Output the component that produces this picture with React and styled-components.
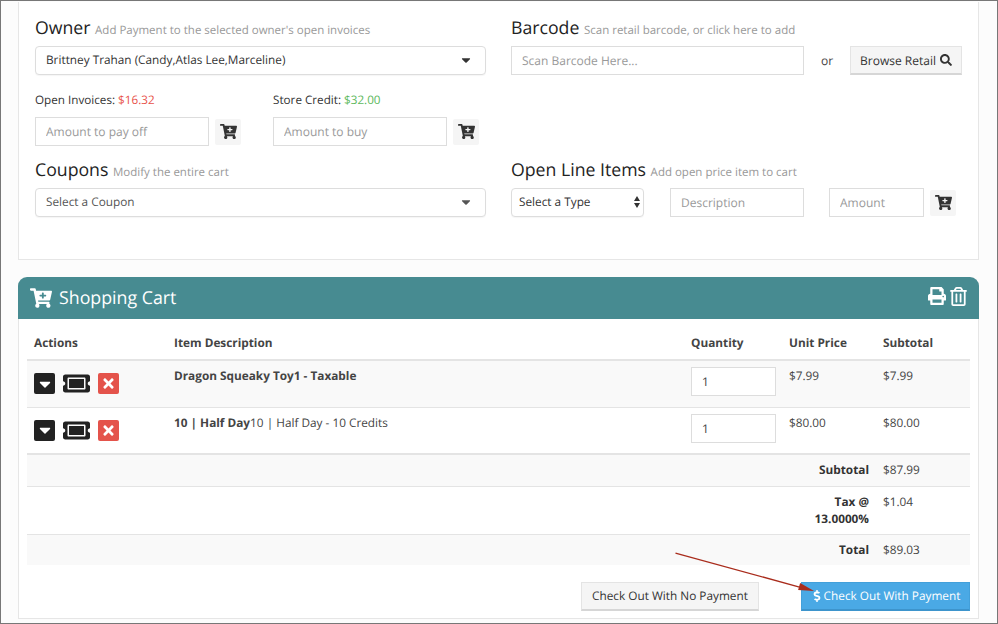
import React from 'react';
import styled, { createGlobalStyle } from 'styled-components';
import { FaCartPlus, FaSearch, FaPrint, FaRegTrashAlt, FaTicketAlt, FaCaretDown, FaTimes, FaDollarSign } from 'react-icons/fa';

const Global = createGlobalStyle`
html,body{margin:0;padding:0;background:#fcfcfc;}
body{font-family:"Open Sans","Liberation Sans",sans-serif;font-size:13px;color:#333;text-rendering:geometricPrecision;}
*{box-sizing:border-box;}
input{text-rendering:geometricPrecision;}
input::placeholder{color:#999;opacity:1;}
`
const Frame = styled.div`
width:998px;
height:624px;
border:1px solid #777;
padding:0 18px 0 17px;
overflow:hidden;
`
const TopCard = styled.div`
height:258px;
margin-top:1px;
background:#fff;
border:1px solid #e6e6e6;
border-top:none;
padding:14px 16px 0 16px;
display:grid;
grid-template-columns:451px 451px;
column-gap:25px;
align-content:start;
`
const Section = styled.div`
display:flex;
flex-direction:column;
height:${props=>props.h}px;
`
const Heading = styled.div`
font-size:17.7px;
line-height:24px;
height:${props=>props.h||30}px;
color:#222;
white-space:nowrap;
small{font-size:11.5px;color:#999;}
`
const SelectBox = styled.div`
height:29px;
width:${props=>props.w||'100%'};
border:1px solid #ddd;
border-radius:4px;
background:#fff;
padding:0 ${props=>props.pr||13}px 1px ${props=>props.pl||10}px;
display:flex;
align-items:center;
justify-content:space-between;
font-size:11.8px;
color:${props=>props.dim?'#555':'#333'};
box-shadow:0 1px 1px rgba(0,0,0,.04);
flex-shrink:0;
svg{font-size:14px;}
`
const Input = styled.input`
height:29px;
width:${props=>props.w}px;
flex-shrink:0;
border:1px solid #ddd;
background:#fff;
padding:0 10px;
font-family:inherit;
font-size:12px;
color:#444;
outline:none;
`
const Payoffs = styled.div`
display:flex;
gap:32px;
margin-top:17px;
`
const Payoff = styled.div`
display:flex;
flex-direction:column;
`
const Label = styled.div`
font-size:11.7px;
line-height:16px;
height:16px;
margin-bottom:9px;
color:#333;
span{color:${props=>props.color};}
`
const InputRow = styled.div`
display:flex;
align-items:center;
gap:${props=>props.gap ?? 6}px;
`
const CartBtn = styled.div`
width:26px;
height:26px;
flex-shrink:0;
background:#f5f5f5;
border-radius:2px;
display:flex;
align-items:center;
justify-content:center;
color:#333;
font-size:17px;
`
const Or = styled.div`
width:46px;
text-align:center;
font-size:12px;
color:#444;
`
const Button = styled.div`
height:${props=>props.h||29}px;
display:flex;
align-items:center;
justify-content:center;
gap:${props=>props.gap||0}px;
font-size:${props=>props.fs||12}px;
white-space:nowrap;
width:${props=>props.w}px;
flex-shrink:0;
background:${props=>props.primary?'#4aa9e5':'#f5f5f5'};
color:${props=>props.primary?'#fff':'#333'};
border:1px solid ${props=>props.primary?'#43a0da':'#e4e4e4'};
border-bottom:2px solid ${props=>props.primary?'#3d94cc':'#d6d6d6'};
`
const Arrows = styled.svg`
width:6px;
height:12px;
`
const Panel = styled.div`
position:relative;
margin-top:17px;
height:342px;
background:#fff;
border:1px solid #e6e6e6;
border-top:none;
border-radius:9px 9px 0 0;
`
const PanelHead = styled.div`
height:42px;
margin:0 -1px;
background:#478b91;
border-radius:9px 9px 0 0;
color:#fff;
display:flex;
align-items:center;
justify-content:space-between;
padding:0 11px 0 12px;
`
const PanelTitle = styled.div`
display:flex;
align-items:center;
gap:7px;
font-size:17.8px;
`
const PanelTools = styled.div`
display:flex;
align-items:center;
gap:3px;
font-size:18px;
margin-top:-4px;
`
const Table = styled.table`
width:943px;
margin:0 8px;
table-layout:fixed;
border-collapse:collapse;
font-size:11.8px;
color:#444;
`
const Th = styled.th`
height:41px;
padding:8px 7px 0;
text-align:left;
font-weight:700;
border-bottom:2px solid #e4e4e4;
`
const Row = styled.tr`
background:${props=>props.odd?'#f9f9f9':'#fff'};
`
const Td = styled.td`
vertical-align:top;
height:${props=>props.h}px;
padding:${props=>props.pad||7}px 7px 0;
border-bottom:${props=>props.thick?2:1}px solid #e4e4e4;
line-height:16px;
`
const SumLabel = styled.td`
vertical-align:top;
text-align:right;
font-weight:700;
color:#333;
padding:7px 7px 0;
line-height:17px;
height:${props=>props.h}px;
border-bottom:${props=>props.last?0:1}px solid #e4e4e4;
`
const SumValue = styled(SumLabel)`
text-align:left;
font-weight:400;
color:#444;
`
const Actions = styled.div`
display:flex;
align-items:center;
gap:8px;
`
const ActionBox = styled.div`
width:21px;
height:21px;
border-radius:2px;
background:${props=>props.bg};
color:#fff;
display:flex;
align-items:center;
justify-content:center;
font-size:${props=>props.size||14}px;
`
const Ticket = styled.div`
width:27px;
height:21px;
display:flex;
align-items:center;
justify-content:center;
color:#222;
font-size:27px;
`
const QtyInput = styled(Input)`
display:block;
`
const Footer = styled.div`
display:flex;
justify-content:flex-end;
gap:42px;
margin:17px 8px 0 0;
`
const Arrow = styled.svg`
position:absolute;
left:0;
top:0;
width:100%;
height:100%;
pointer-events:none;
`

const items = [
    {id:1,name:'Dragon Squeaky Toy1 - Taxable',note:'',price:'$7.99',odd:true},
    {id:2,name:'10 | Half Day',note:'10 | Half Day - 10 Credits',price:'$80.00',thick:true},
]

const App = () => {
    return (
        <Frame>
            <Global/>
            <TopCard>
                <Section h={142}>
                    <Heading>Owner <small>Add Payment to the selected owner's open invoices</small></Heading>
                    <SelectBox pr={12}>Brittney Trahan (Candy,Atlas Lee,Marceline)<FaCaretDown/></SelectBox>
                    <Payoffs>
                        <Payoff>
                            <Label color="#e8524a">Open Invoices: <span>$16.32</span></Label>
                            <InputRow gap={6}><Input w={174} placeholder="Amount to pay off"/><CartBtn><FaCartPlus/></CartBtn></InputRow>
                        </Payoff>
                        <Payoff>
                            <Label color="#5cb85c">Store Credit: <span>$32.00</span></Label>
                            <InputRow gap={6}><Input w={174} placeholder="Amount to buy"/><CartBtn><FaCartPlus/></CartBtn></InputRow>
                        </Payoff>
                    </Payoffs>
                </Section>
                <Section h={142}>
                    <Heading>Barcode <small>Scan retail barcode, or click here to add</small></Heading>
                    <InputRow gap={0}>
                        <Input w={293} placeholder="Scan Barcode Here..."/>
                        <Or>or</Or>
                        <Button w={112} gap={4}>Browse Retail <FaSearch/></Button>
                    </InputRow>
                </Section>
                <Section h={72}>
                    <Heading>Coupons <small>Modify the entire cart</small></Heading>
                    <SelectBox dim pr={12}>Select a Coupon<FaCaretDown/></SelectBox>
                </Section>
                <Section h={72}>
                    <Heading>Open Line Items <small>Add open price item to cart</small></Heading>
                    <InputRow gap={0}>
                        <SelectBox w="133px" pr={3} pl={7}>Select a Type
                            <Arrows viewBox="0 0 6 12"><path d="M3 0 6 5H0zM3 12 0 7h6z" fill="#333"/></Arrows>
                        </SelectBox>
                        <Input w={134} style={{marginLeft:26}} placeholder="Description"/>
                        <Input w={95} style={{marginLeft:25,marginRight:6}} placeholder="Amount"/>
                        <CartBtn><FaCartPlus/></CartBtn>
                    </InputRow>
                </Section>
            </TopCard>
            <Panel>
                <PanelHead>
                    <PanelTitle><FaCartPlus size={22}/>Shopping Cart</PanelTitle>
                    <PanelTools><FaPrint/><FaRegTrashAlt size={19}/></PanelTools>
                </PanelHead>
                <Table>
                    <colgroup>
                        <col width="140"/><col width="517"/><col width="98"/><col width="94"/><col width="94"/>
                    </colgroup>
                    <thead>
                        <tr><Th>Actions</Th><Th>Item Description</Th><Th>Quantity</Th><Th>Unit Price</Th><Th>Subtotal</Th></tr>
                    </thead>
                    <tbody>
                        {items.map(item=><Row odd={item.odd} key={item.id}>
                            <Td h={47} pad={12} thick={item.thick}>
                                <Actions>
                                    <ActionBox bg="#222" size={18}><FaCaretDown/></ActionBox>
                                    <Ticket><FaTicketAlt/></Ticket>
                                    <ActionBox bg="#e4534b" size={15}><FaTimes/></ActionBox>
                                </Actions>
                            </Td>
                            <Td thick={item.thick}><b>{item.name}</b>{item.note}</Td>
                            <Td thick={item.thick} pad={6}><QtyInput w={85} defaultValue="1"/></Td>
                            <Td thick={item.thick}>{item.price}</Td>
                            <Td thick={item.thick}>{item.price}</Td>
                        </Row>)}
                        <Row odd>
                            <SumLabel colSpan={4} h={32}>Subtotal</SumLabel>
                            <SumValue h={32}>$87.99</SumValue>
                        </Row>
                        <Row>
                            <SumLabel colSpan={3} h={48}></SumLabel>
                            <SumLabel h={48}>Tax @ 13.0000%</SumLabel>
                            <SumValue h={48}>$1.04</SumValue>
                        </Row>
                        <Row odd>
                            <SumLabel colSpan={4} h={31} last>Total</SumLabel>
                            <SumValue h={31} last>$89.03</SumValue>
                        </Row>
                    </tbody>
                </Table>
                <Footer>
                    <Button w={178} h={29} fs={11.8}>Check Out With No Payment</Button>
                    <Button w={169} h={29} fs={11.8} gap={1} primary><FaDollarSign size={12}/>Check Out With Payment</Button>
                </Footer>
                <Arrow viewBox="0 0 959 342">
                    <path d="M657 277 785 312" stroke="#a92c1c" strokeWidth="1.4" fill="none"/>
                    <path d="M796 315 782 307 780 314z" fill="#a92c1c"/>
                </Arrow>
            </Panel>
        </Frame>
    )
}

export default App
